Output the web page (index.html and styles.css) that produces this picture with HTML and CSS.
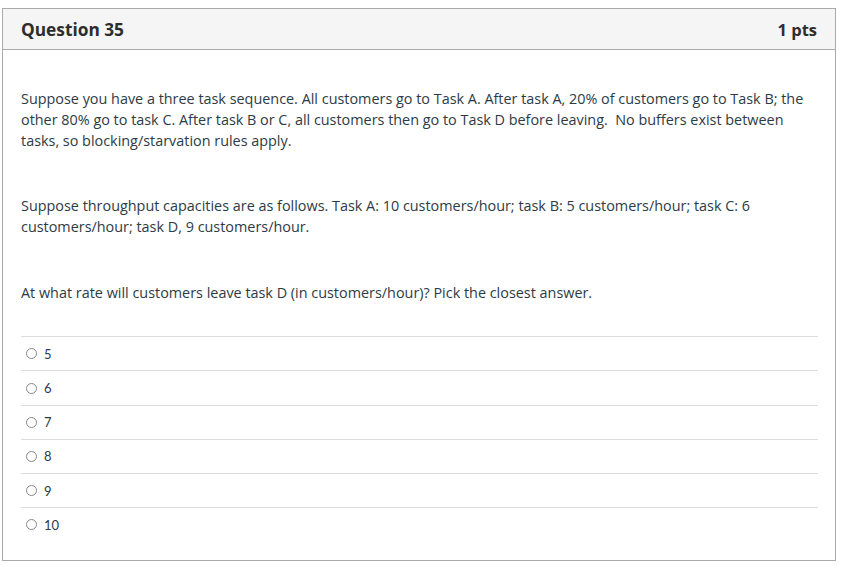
FILE: index.html
```html
<!DOCTYPE html>
<html>
<head>
<meta charset="utf-8">
<link rel="stylesheet" href="styles.css">
</head>
<body>
<div class="question">
  <div class="header">
    <span class="title">Question 35</span>
    <span class="pts">1 pts</span>
  </div>
  <div class="content">
    <p class="p1">Suppose you have a three task sequence. All customers go to Task A. After task A, 20% of customers go to Task B; the other 80% go to task C. After task B or C, all customers then go to Task D before leaving.&nbsp; No buffers exist between tasks, so blocking/starvation rules apply.</p>
    <p class="p2">Suppose throughput capacities are as follows. Task A: 10 customers/hour; task B: 5 customers/hour; task C: 6 customers/hour; task D, 9 customers/hour.</p>
    <p class="p3">At what rate will customers leave task D (in customers/hour)? Pick the closest answer.</p>
    <div class="answers">
      <div class="answer"><span class="radio"></span><span class="label">5</span></div>
      <div class="answer"><span class="radio"></span><span class="label">6</span></div>
      <div class="answer"><span class="radio"></span><span class="label">7</span></div>
      <div class="answer"><span class="radio"></span><span class="label">8</span></div>
      <div class="answer"><span class="radio"></span><span class="label">9</span></div>
      <div class="answer"><span class="radio"></span><span class="label">10</span></div>
    </div>
  </div>
</div>
</body>
</html>
```

FILE: styles.css
```css
html, body {
  margin: 0;
  padding: 0;
  background: #ffffff;
}
body {
  padding: 8px 0 0 2px;
  font-family: "Open Sans", "Liberation Sans", sans-serif;
  color: #2d3b45;
}
.question {
  width: 834px;
  box-sizing: border-box;
  border: 1px solid #aaaaaa;
  height: 553px;
}
.header {
  display: flex;
  justify-content: space-between;
  align-items: center;
  height: 41px;
  box-sizing: border-box;
  background: #f5f5f5;
  border-bottom: 1px solid #aaaaaa;
  padding: 0 18px;
  color: #2d2d2d;
  font-weight: 700;
}
.title {
  font-size: 17.3px;
}
.pts {
  font-size: 16.5px;
}
.content {
  padding: 0 17px 0 18px;
}
.content p {
  margin: 0;
  font-size: 14.4px;
  line-height: 21.2px;
}
.p1 {
  padding-top: 38px;
}
.p2 {
  margin-top: 43px !important;
}
.p3 {
  margin-top: 45px !important;
}
.answers {
  margin-top: 33px;
}
.answer {
  display: flex;
  align-items: center;
  height: 33.2px;
  border-top: 1px solid #dddddd;
  padding-left: 5px;
  font-family: "Lato", "Liberation Sans", sans-serif;
  font-size: 13px;
  color: #2d3b45;
}
.radio {
  width: 9px;
  height: 9px;
  border: 1px solid #888888;
  border-radius: 50%;
  margin-right: 7px;
  flex: none;
}
```
